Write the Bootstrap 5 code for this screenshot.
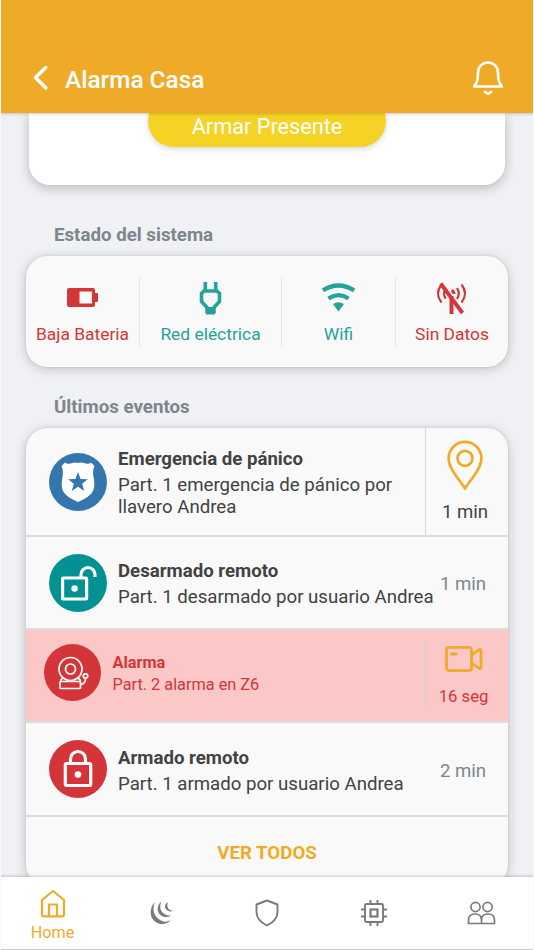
<!DOCTYPE html>
<html lang="es">
<head>
<meta charset="utf-8">
<meta name="viewport" content="width=device-width, initial-scale=1">
<title>Alarma Casa</title>
<link href="https://cdn.jsdelivr.net/npm/bootstrap@5.3.0/dist/css/bootstrap.min.css" rel="stylesheet">
<style>
body{font-family:Roboto,"Liberation Sans",sans-serif;background:#f0f1f4;height:950px;color:#424242;overflow:hidden;border-left:1px solid #fafafa;border-right:1px solid #fafafa}
svg{display:block;flex:none;overflow:visible}
.app-header{height:113px;background:#efab28;padding:44px 29px 0 31px;color:#fff;box-shadow:0 1px 3px rgba(0,0,0,.2);z-index:2}
.app-title{font-size:24.4px;font-weight:500;line-height:30px;margin-left:18px;padding-top:2px}
.app-main{height:764px;overflow:hidden}
.arm-panel{height:72px;margin:0 28px;background:#fff;border-radius:0 0 21px 21px;box-shadow:0 3px 12px rgba(0,0,0,.24)}
.arm-btn,.arm-btn:hover{width:238px;height:52px;margin-top:-18px;border-radius:26px;background:#f5d325;color:#fff;font-size:21.7px;padding:11px 0 0;line-height:30px;border:0;box-shadow:0 2px 6px rgba(0,0,0,.16)}
.sec-title{font-size:18.7px;font-weight:700;color:#7c868d;line-height:24px;margin:38px 0 9px 53px}
.sec-title.events-title{margin-top:28px}
.panel{margin:0 25px;background:#f9f9f9;border-radius:21px;box-shadow:0 2px 12px rgba(0,0,0,.2),0 0 2px rgba(0,0,0,.16)}
.status-grid{height:111px;display:grid;grid-template-columns:114px 142px 114px 112px}
.stat{margin-top:21px;height:70px;font-size:17.4px;line-height:22px;border-right:1px solid #e2e7ec;white-space:nowrap;padding-top:1px}
.stat:last-child{border:0}
.stat svg{margin-bottom:5px}
.red{color:#d43538}.teal{color:#24a39b}
.event{height:93px;border-bottom:2px solid #dcdcdc;padding-left:22.500px}
.event-first{height:109px}
.event-last{height:94px}
.disc{width:58px;height:58px;border-radius:50%;flex:none;margin-right:11.500px;color:#fff}
.disc-blue{background:#3476ae}.disc-teal{background:#029294}.disc-red{background:#d43538}
.ev-body{width:316px;font-size:18.65px;line-height:22px;white-space:nowrap;flex:none;padding-top:2px}
.ev-title{font-weight:700;font-size:18.65px;margin-bottom:4px;line-height:22px}
.ev-side{font-size:18.6px;color:#7c868d;width:58px;line-height:22px;flex:none;padding-top:2px}
.pin-side{width:83px;border-left:1.500px solid #d8d8d8;margin-left:auto;color:#424242;padding:0 4px 2px 0}
.event-first .ev-body{width:295px}
.event-last .ev-side{padding-top:3px}
.event-last .ev-body{padding-top:3px}
.ev-alarm{background:#fbc7c7;padding:0 0 5px 18px}
.ev-alarm .disc{width:57px;height:57px;margin-bottom:1px}
.ev-alarm .ev-body{font-size:16.3px;padding:2px 0 0;width:305px}
.ev-alarm .ev-title{font-size:16.3px;margin:0}
.ev-alarm .ev-side{font-size:16.7px;height:70px;width:83px;border-left:2px solid #e4cccd;margin-left:auto;padding:0 8px 0 0;color:#d43538;position:relative;top:2px}
.ev-more{height:69px;padding-top:3px}
.all-link{color:#efab28;font-weight:700;font-size:18.7px;text-decoration:none}
.tabs{height:73px;background:#fff;border-bottom:1px solid #ccc;box-shadow:0 -1px 3px rgba(0,0,0,.2);z-index:2;color:#7a7a7a;margin:0 -2px}
.tabs a{color:inherit;text-decoration:none;width:20%;font-size:16.2px;line-height:22px}
.tabs a.current{color:#efab28;padding-bottom:5px}
</style>
</head>
<body class="d-flex flex-column">
<header class="app-header d-flex align-items-center position-relative">
  <svg class="mb-1" width="15" height="32" viewBox="0 0 15 32" fill="none" stroke="#fff" stroke-width="3.4" stroke-linecap="round" stroke-linejoin="round"><path d="M13.800 6.500 3.500 16.500 13.800 27"/></svg>
  <h1 class="app-title mb-0">Alarma Casa</h1>
  <svg class="ms-auto mb-1" width="32" height="36" viewBox="0 0 32 36" fill="none" stroke="#fff" stroke-width="2.6" stroke-linecap="round" stroke-linejoin="round"><path d="M2 27.500C5.500 23 6 20 6 13.500a10 10 0 0 1 20 0C26 20 26.500 23 30 27.500ZM13 32.800q3 3.400 6 0"/></svg>
</header>

<main class="app-main">
  <section class="arm-panel d-flex justify-content-center align-items-start"><button class="btn arm-btn">Armar Presente</button></section>

  <h2 class="sec-title">Estado del sistema</h2>
  <section class="panel status-grid">
    <div class="stat red d-flex flex-column align-items-center">
      <svg width="32" height="40" viewBox="0 0 32 40"><path fill="currentColor" fill-rule="evenodd" d="M2 10h24a2 2 0 0 1 2 2v3h2q1 0 1 1v7q0 1-1 1h-2v3a2 2 0 0 1-2 2H2a2 2 0 0 1-2-2V12a2 2 0 0 1 2-2ZM12.500 13.500H25v12H12.500Z"/></svg>Baja Bateria</div>
    <div class="stat teal d-flex flex-column align-items-center">
      <svg width="24" height="40" viewBox="0 0 24 40"><path fill="none" stroke="currentColor" stroke-width="3.600" d="M6.300 4v8M16.700 4v8M5 13h13l2.500 2.500v8L15 29.500v4H8v-4L2.500 23.500v-8Z"/><path fill="currentColor" d="M7 29h9v7.500H7z"/></svg>Red eléctrica</div>
    <div class="stat teal d-flex flex-column align-items-center">
      <svg width="34" height="40" viewBox="0 0 34 40"><path fill="none" stroke="currentColor" stroke-width="4.200" d="M.9 12.400q15.600-9.800 31.200 0M6.500 20.500q10-6.600 20 0"/><path fill="currentColor" d="M11 26q5.500-3.300 11 0l-5.500 7.500Z"/></svg>Wifi</div>
    <div class="stat red d-flex flex-column align-items-center">
      <svg width="32" height="40" viewBox="0 0 32 40" fill="none" stroke="currentColor" stroke-width="2.200"><path d="M5.500 6.500q-7 9 0 18M9.800 10.500q-3.500 5.500 0 10M25.500 6.500q7 9 0 18M21 10q3.500 5.500 0 11"/><path stroke-width="4" d="M15.500 18v18"/><path stroke-width="3.800" d="M4.700 5.500 26.500 35"/><path stroke-width="3" d="M15.500 12.500q2.500 1 2.500 3.500"/></svg>Sin Datos</div>
  </section>

  <h2 class="sec-title events-title">Últimos eventos</h2>
  <section class="panel">
    <article class="event event-first d-flex align-items-center">
      <div class="disc disc-blue d-flex align-items-center justify-content-center"><svg width="34" height="42" viewBox="0 0 34 42"><path fill="#fff" d="M4 1.500Q6 3.500 9.500 2.500 14 1 17 2q3-1 7.500.5 3.500 1 5.500-1L33.500 5q-2.300 5-.8 12 1.500 8-.7 13-3 6-15 11Q5 36 2 30q-2.200-5-.7-13 1.500-7-.8-12Z"/><path fill="#3476ae" d="m17 11 2.600 7 7.300.2-5.800 4.500 2.200 7.300-6.300-4.300-6.300 4.300 2.200-7.300-5.800-4.500 7.300-.2Z"/></svg></div>
      <div class="ev-body"><div class="ev-title">Emergencia de pánico</div>Part. 1 emergencia de pánico por<br>llavero Andrea</div>
      <div class="ev-side pin-side d-flex flex-column align-items-center justify-content-center h-100"><svg class="mb-2" width="38" height="54" viewBox="0 0 38 54" fill="none" stroke="#efab28" stroke-width="2.700" stroke-linejoin="round"><path d="M19 49.500C13 40 2.600 29.500 2.600 19.300a16.400 16.400 0 0 1 32.800 0C35.400 29.500 25 40 19 49.500Z"/><circle cx="19" cy="19.300" r="7.500"/></svg><span>1 min</span></div>
    </article>
    <article class="event d-flex align-items-center">
      <div class="disc disc-teal d-flex align-items-center justify-content-center"><svg width="36" height="36" viewBox="0 0 36 36" fill="none" stroke="#fff" stroke-width="3.200" stroke-linejoin="round"><rect x="2.600" y="13" width="24" height="21" rx=".8"/><path d="M21 13V9.500a7 7 0 0 1 14 0V12"/><circle cx="14.600" cy="23.500" r="3.200" fill="#fff" stroke="none"/></svg></div>
      <div class="ev-body"><div class="ev-title">Desarmado remoto</div>Part. 1 desarmado por usuario Andrea</div>
      <div class="ev-side text-center">1 min</div>
    </article>
    <article class="event ev-alarm red d-flex align-items-center">
      <div class="disc disc-red d-flex align-items-center justify-content-center"><svg width="32" height="34" viewBox="0 0 32 34" fill="none" stroke="#fff" stroke-width="1.700" stroke-linejoin="round"><circle cx="13.500" cy="13" r="11.500"/><circle cx="13.500" cy="13" r="5"/><path d="M6 22q-2.500 1.500-2.500 3.500M21 22q2.500 1.500 2.500 3.500M24 28.500q4.500-1 4.500-6"/><rect x="3" y="25.500" width="20.500" height="7" rx="1"/><circle cx="28.500" cy="20" r="2.200"/></svg></div>
      <div class="ev-body"><div class="ev-title">Alarma</div>Part. 2 alarma en Z6</div>
      <div class="ev-side d-flex flex-column align-items-center"><svg width="40" height="38" viewBox="0 0 40 38" fill="none" stroke="#efab28" stroke-width="2.800" stroke-linecap="round" stroke-linejoin="round"><rect x="2.500" y="7.400" width="25" height="23.200" rx="2.600"/><path d="M7.500 14H12M28 15l6.500-5q2.500-1.400 2.500 1v16q0 2.400-2.500 1L28 23"/></svg><span class="mt-2">16 seg</span></div>
    </article>
    <article class="event event-last d-flex align-items-center">
      <div class="disc disc-red d-flex align-items-center justify-content-center"><svg width="30" height="40" viewBox="0 0 30 40" fill="none" stroke="#fff" stroke-width="3.200" stroke-linejoin="round"><rect x="2.300" y="14.500" width="25.400" height="22" rx="1.200"/><path d="M7.500 14.500V10a7.500 7.500 0 0 1 15 0v4.500"/><circle cx="15" cy="25.500" r="3.300" fill="#fff" stroke="none"/></svg></div>
      <div class="ev-body"><div class="ev-title">Armado remoto</div>Part. 1 armado por usuario Andrea</div>
      <div class="ev-side text-center">2 min</div>
    </article>
    <div class="ev-more d-flex justify-content-center align-items-center"><a class="all-link" href="#">VER TODOS</a></div>
  </section>
</main>

<nav class="tabs d-flex position-relative">
  <a href="#" class="current d-flex flex-column align-items-center justify-content-end"><svg width="26" height="29" viewBox="0 0 26 29" fill="none" stroke="currentColor" stroke-width="2.200" stroke-linejoin="round"><path d="M2 11 13 2l11 9v14.500a1.800 1.800 0 0 1-1.800 1.800H3.800A1.800 1.800 0 0 1 2 25.500ZM9 27V15.500h8V27"/></svg><span class="mt-1">Home</span></a>
  <a href="#" class="d-flex align-items-center justify-content-center ps-1" aria-label="Noche"><svg width="24" height="24" viewBox="0 0 24 24" fill="currentColor"><path d="M5 1C-1.500 7-.5 18 6.500 21.500 12 24.500 18 23 21 18.500 17 22 11.500 21 7.500 17 3 12.500 2.500 7 5 1ZM11.500 .5C6.500 4.500 6.500 11 11 14.500q5 3.200 10.500 0-6 .4-9-3.100C9.500 8 9.800 4.500 11.500.5ZM18 1c-4 2.500-4 6-.5 8.500q3 1.800 6 .2-3.500.3-5-2C17 6 17 3.500 18 1Z"/></svg></a>
  <a href="#" class="d-flex align-items-center justify-content-center" aria-label="Seguridad"><svg width="24" height="28" viewBox="0 0 24 28" fill="none" stroke="currentColor" stroke-width="1.900" stroke-linejoin="round"><path d="M12 1.500 22.500 5.500V13q0 8.500-10.500 13.500Q1.500 21.500 1.500 13V5.500Z"/></svg></a>
  <a href="#" class="d-flex align-items-center justify-content-center" aria-label="Dispositivos"><svg width="28" height="28" viewBox="0 0 28 28" fill="none" stroke="currentColor" stroke-width="1.900"><rect x="5" y="5" width="18" height="18" rx="1.500"/><rect x="10.500" y="10.500" width="7" height="7" stroke-width="2.200"/><path d="M10.500 5V1M17.500 5V1M10.500 27v-4M17.500 27v-4M5 10.500H1M5 17.500H1M27 10.500h-4M27 17.500h-4"/></svg></a>
  <a href="#" class="d-flex align-items-center justify-content-center" aria-label="Usuarios"><svg width="28" height="24" viewBox="0 0 28 24" fill="none" stroke="currentColor" stroke-width="1.700" stroke-linejoin="round"><circle cx="8.500" cy="6" r="4.600"/><circle cx="20.500" cy="6" r="4.600"/><path d="M1.500 22.500V19q0-6 6.500-6t6.500 6v3.500ZM14.500 22.500V19q0-6 6.500-6t6.500 6v3.500Z"/></svg></a>
</nav>
<script src="https://cdn.jsdelivr.net/npm/bootstrap@5.3.0/dist/js/bootstrap.bundle.min.js"></script>
</body>
</html>
